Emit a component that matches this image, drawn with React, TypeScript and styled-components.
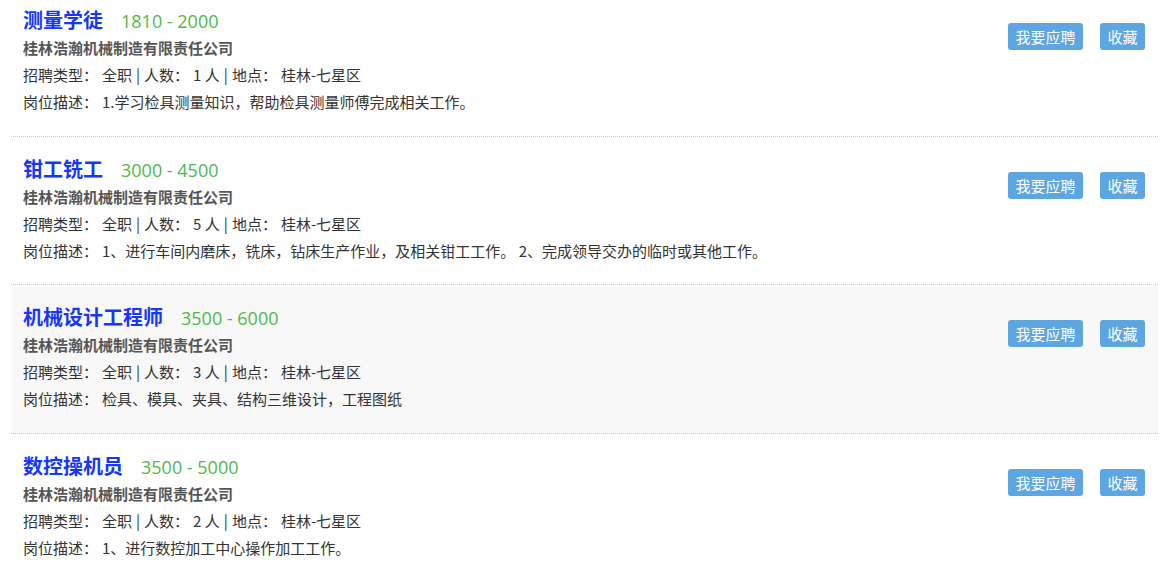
import React from 'react';
import styled, { createGlobalStyle } from 'styled-components';

const GlobalStyle = createGlobalStyle`
  html, body {
    margin: 0;
    padding: 0;
    background: #fff;
  }
  body {
    font-family: "Noto Sans CJK SC", sans-serif;
    color: #333;
    overflow: hidden;
  }
`;

interface Job {
  title: string;
  salary: string;
  company: string;
  type: string;
  count: number;
  place: string;
  desc: string;
}

const jobs: Job[] = [
  {
    title: '测量学徒',
    salary: '1810 - 2000',
    company: '桂林浩瀚机械制造有限责任公司',
    type: '全职',
    count: 1,
    place: '桂林-七星区',
    desc: '1.学习检具测量知识，帮助检具测量师傅完成相关工作。',
  },
  {
    title: '钳工铣工',
    salary: '3000 - 4500',
    company: '桂林浩瀚机械制造有限责任公司',
    type: '全职',
    count: 5,
    place: '桂林-七星区',
    desc: '1、进行车间内磨床，铣床，钻床生产作业，及相关钳工工作。 2、完成领导交办的临时或其他工作。',
  },
  {
    title: '机械设计工程师',
    salary: '3500 - 6000',
    company: '桂林浩瀚机械制造有限责任公司',
    type: '全职',
    count: 3,
    place: '桂林-七星区',
    desc: '检具、模具、夹具、结构三维设计，工程图纸',
  },
  {
    title: '数控操机员',
    salary: '3500 - 5000',
    company: '桂林浩瀚机械制造有限责任公司',
    type: '全职',
    count: 2,
    place: '桂林-七星区',
    desc: '1、进行数控加工中心操作加工工作。',
  },
];

const JobList = styled.ul`
  list-style: none;
  margin: -12px 0 0 11px;
  padding: 0;
  width: 1147px;
`;

const JobItem = styled.li<{ $active?: boolean }>`
  display: flex;
  justify-content: space-between;
  align-items: flex-start;
  height: 147.5px;
  box-sizing: content-box;
  padding: 0 13px 0 12px;
  border-bottom: 1px dotted #c8c8c8;
  background: ${p => (p.$active ? '#f8f8f8' : '#fff')};
`;

const Info = styled.div`
  padding-top: 18px;
`;

const TitleRow = styled.div`
  display: flex;
  align-items: baseline;
  height: 28px;
  line-height: 28px;
`;

const Title = styled.a`
  font-size: 20px;
  font-weight: 700;
  color: #1536ff;
  text-decoration: none;
`;

const Salary = styled.span`
  margin-left: 18px;
  font-family: "Open Sans", sans-serif;
  font-size: 18px;
  color: #52b84a;
`;

const Company = styled.div`
  font-size: 15px;
  font-weight: 700;
  color: #555;
  line-height: 27px;
`;

const Line = styled.div`
  font-size: 15px;
  line-height: 27px;
  color: #333;
  white-space: nowrap;
`;

const Value = styled.span`
  margin-left: 4px;
`;

const Sep = styled.span`
  margin: 0 4px;
`;

const Actions = styled.div`
  display: flex;
  gap: 17px;
  margin-top: 35px;
`;

const ActionButton = styled.button`
  height: 27px;
  padding: 0 7.5px;
  border: none;
  border-radius: 3px;
  background: #5ea6e2;
  color: #fff;
  font-family: "Noto Sans CJK SC", sans-serif;
  font-size: 15px;
  line-height: 27px;
  cursor: pointer;
`;

const App: React.FC = () => (
  <>
    <GlobalStyle />
    <JobList>
      {jobs.map((job, i) => (
        <JobItem key={job.title} $active={i === 2}>
          <Info>
            <TitleRow>
              <Title href="#">{job.title}</Title>
              <Salary>{job.salary}</Salary>
            </TitleRow>
            <Company>{job.company}</Company>
            <Line>
              招聘类型：
              <Value>
                {job.type}
                <Sep>|</Sep>人数：<Value>{job.count} 人</Value>
                <Sep>|</Sep>地点：<Value>{job.place}</Value>
              </Value>
            </Line>
            <Line>
              岗位描述：
              <Value>{job.desc}</Value>
            </Line>
          </Info>
          <Actions>
            <ActionButton>我要应聘</ActionButton>
            <ActionButton>收藏</ActionButton>
          </Actions>
        </JobItem>
      ))}
    </JobList>
  </>
);

export default App;
